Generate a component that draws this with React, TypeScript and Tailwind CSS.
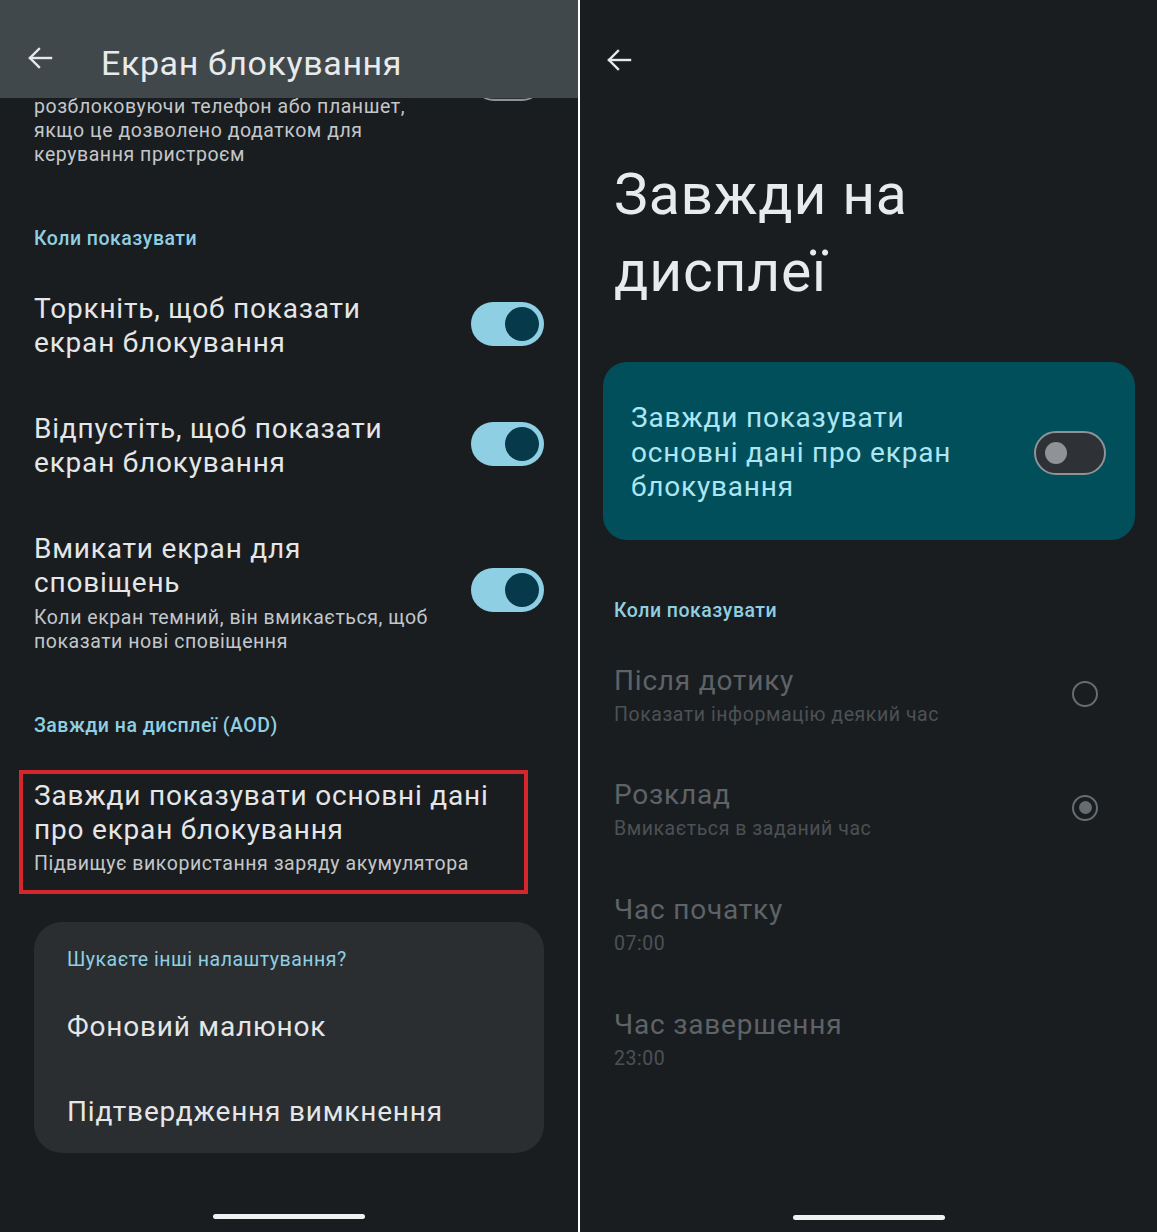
import React from 'react';

const BackArrow = () => (
  <svg width="26" height="24" viewBox="0 0 26 24" fill="none" stroke="#e6e8e9" strokeWidth="2.4" strokeLinecap="square">
    <path d="M3 12H24" />
    <path d="M12 3L3 12L12 21" />
  </svg>
);

const ToggleOn = ({ className = '' }: { className?: string }) => (
  <div className={`w-[73px] h-[44px] rounded-full bg-[#8ecfe3] flex items-center justify-end pr-[5px] shrink-0 ${className}`}>
    <div className="w-[34px] h-[34px] rounded-full bg-[#06394a]" />
  </div>
);

const ToggleOff = () => (
  <div className="w-[72px] h-[44px] rounded-full bg-[#2e3135] border-2 border-[#8d9397] flex items-center pl-[9px] shrink-0">
    <div className="w-[22px] h-[22px] rounded-full bg-[#8f9396]" />
  </div>
);

const Radio = ({ checked }: { checked?: boolean }) => (
  <div className="w-[26px] h-[26px] rounded-full border-[2.5px] border-[#676c70] flex items-center justify-center shrink-0 -mt-[3px]">
    {checked && <div className="w-[13px] h-[13px] rounded-full bg-[#676c70]" />}
  </div>
);

const SectionLabel = ({ children, className = '' }: { children: React.ReactNode; className?: string }) => (
  <div className={`text-[19.5px] leading-[24px] tracking-[0.5px] font-medium text-[#8fcfe1] ${className}`}>{children}</div>
);

// shared text styles
const title = 'text-[28px] leading-[34px] tracking-[0.8px]';
const sub = 'text-[19.5px] leading-[24px] tracking-[0.55px]';

const LockScreen = () => (
  <div className="relative w-[578px] h-full bg-[#1a1d20] flex flex-col overflow-hidden">
    {/* toolbar over scrolled content */}
    <div className="absolute top-0 left-0 right-0 h-[98px] bg-[#40484b] z-10 flex items-start">
      <div className="ml-[27px] mt-[46px]">
        <BackArrow />
      </div>
      <div className="ml-[48px] mt-[42px] text-[34px] leading-[42px] tracking-[0.6px] text-[#e8eaeb]">Екран блокування</div>
    </div>

    <div className="pt-[95px] flex pr-[34px]">
      <div className={`pl-[34px] ${sub} text-[#c3c7ca]`}>
        розблоковуючи телефон або планшет,
        <br />
        якщо це дозволено додатком для
        <br />
        керування пристроєм
      </div>
      <div className="ml-auto -mt-[38px]">
        <ToggleOff />
      </div>
    </div>

    <SectionLabel className="mt-[60px] pl-[34px]">Коли показувати</SectionLabel>

    <div className="mt-[41px] flex items-center justify-between pl-[34px] pr-[34px]">
      <div className={`${title} text-[#e4e6e7]`}>
        Торкніть, щоб показати
        <br />
        екран блокування
      </div>
      <ToggleOn className="-mt-[4px]" />
    </div>

    <div className="mt-[52px] flex items-center justify-between pl-[34px] pr-[34px]">
      <div className={`${title} text-[#e4e6e7]`}>
        Відпустіть, щоб показати
        <br />
        екран блокування
      </div>
      <ToggleOn className="-mt-[4px]" />
    </div>

    <div className="mt-[52px] flex items-center justify-between pl-[34px] pr-[34px]">
      <div>
        <div className={`${title} text-[#e4e6e7]`}>
          Вмикати екран для
          <br />
          сповіщень
        </div>
        <div className={`mt-[6px] ${sub} text-[#c3c7ca]`}>
          Коли екран темний, він вмикається, щоб
          <br />
          показати нові сповіщення
        </div>
      </div>
      <ToggleOn className="-mt-[6px]" />
    </div>

    <SectionLabel className="mt-[60px] pl-[34px]">Завжди на дисплеї (AOD)</SectionLabel>

    <div className="mt-[32px] ml-[19px] w-[509px] border-4 border-[#d3262d] pl-[11px] pt-[5px] pb-[14px]">
      <div className={`${title} text-[#e4e6e7]`}>
        Завжди показувати основні дані
        <br />
        про екран блокування
      </div>
      <div className={`mt-[5px] ${sub} text-[#c3c7ca]`}>Підвищує використання заряду акумулятора</div>
    </div>

    <div className="mt-[28px] mx-[34px] rounded-[28px] bg-[#2a2e31] pl-[33px] pt-[26px] pb-[24px]">
      <SectionLabel className="font-normal">Шукаєте інші налаштування?</SectionLabel>
      <div className={`mt-[38px] ${title} text-[#e4e6e7]`}>Фоновий малюнок</div>
      <div className={`mt-[51px] ${title} text-[#e4e6e7]`}>Підтвердження вимкнення</div>
    </div>

    <div className="mt-auto mb-[13px] self-center w-[152px] h-[5px] rounded-full bg-[#f0f1f1]" />
  </div>
);

const DisabledRow = ({ label, hint, radio, className = '' }: { label: string; hint: string; radio?: 'on' | 'off'; className?: string }) => (
  <div className={`flex items-center justify-between pl-[34px] pr-[59px] ${className}`}>
    <div>
      <div className={`${title} text-[#5e6367]`}>{label}</div>
      <div className={`mt-[5px] ${sub} text-[#4c5155]`}>{hint}</div>
    </div>
    {radio && <Radio checked={radio === 'on'} />}
  </div>
);

const AlwaysOn = () => (
  <div className="flex-1 h-full bg-[#1a1d20] flex flex-col">
    <div className="mt-[48px] ml-[26px]">
      <BackArrow />
    </div>
    <div className="mt-[84px] pl-[34px] text-[57px] leading-[77px] tracking-[0.8px] text-[#e8eaeb]">
      Завжди на
      <br />
      дисплеї
    </div>

    <div className="mt-[52px] ml-[23px] w-[532px] rounded-[24px] bg-[#024f5c] pt-[39px] pb-[35px] pl-[28px] pr-[29px] flex items-center justify-between">
      <div className="text-[28px] leading-[34.5px] tracking-[0.8px] text-[#ace6f3]">
        Завжди показувати
        <br />
        основні дані про екран
        <br />
        блокування
      </div>
      <ToggleOff />
    </div>

    <SectionLabel className="mt-[59px] pl-[34px]">Коли показувати</SectionLabel>

    <DisabledRow className="mt-[41px]" label="Після дотику" hint="Показати інформацію деякий час" radio="off" />
    <DisabledRow className="mt-[51px]" label="Розклад" hint="Вмикається в заданий час" radio="on" />
    <DisabledRow className="mt-[52px]" label="Час початку" hint="07:00" />
    <DisabledRow className="mt-[52px]" label="Час завершення" hint="23:00" />

    <div className="mt-auto mb-[12px] self-center w-[152px] h-[5px] rounded-full bg-[#f0f1f1]" />
  </div>
);

export default function App() {
  return (
    <div className="w-[1157px] h-[1232px] flex bg-[#1a1d20] font-[Roboto,sans-serif] overflow-hidden">
      <LockScreen />
      <div className="w-[2px] h-full bg-white shrink-0" />
      <AlwaysOn />
    </div>
  );
}
